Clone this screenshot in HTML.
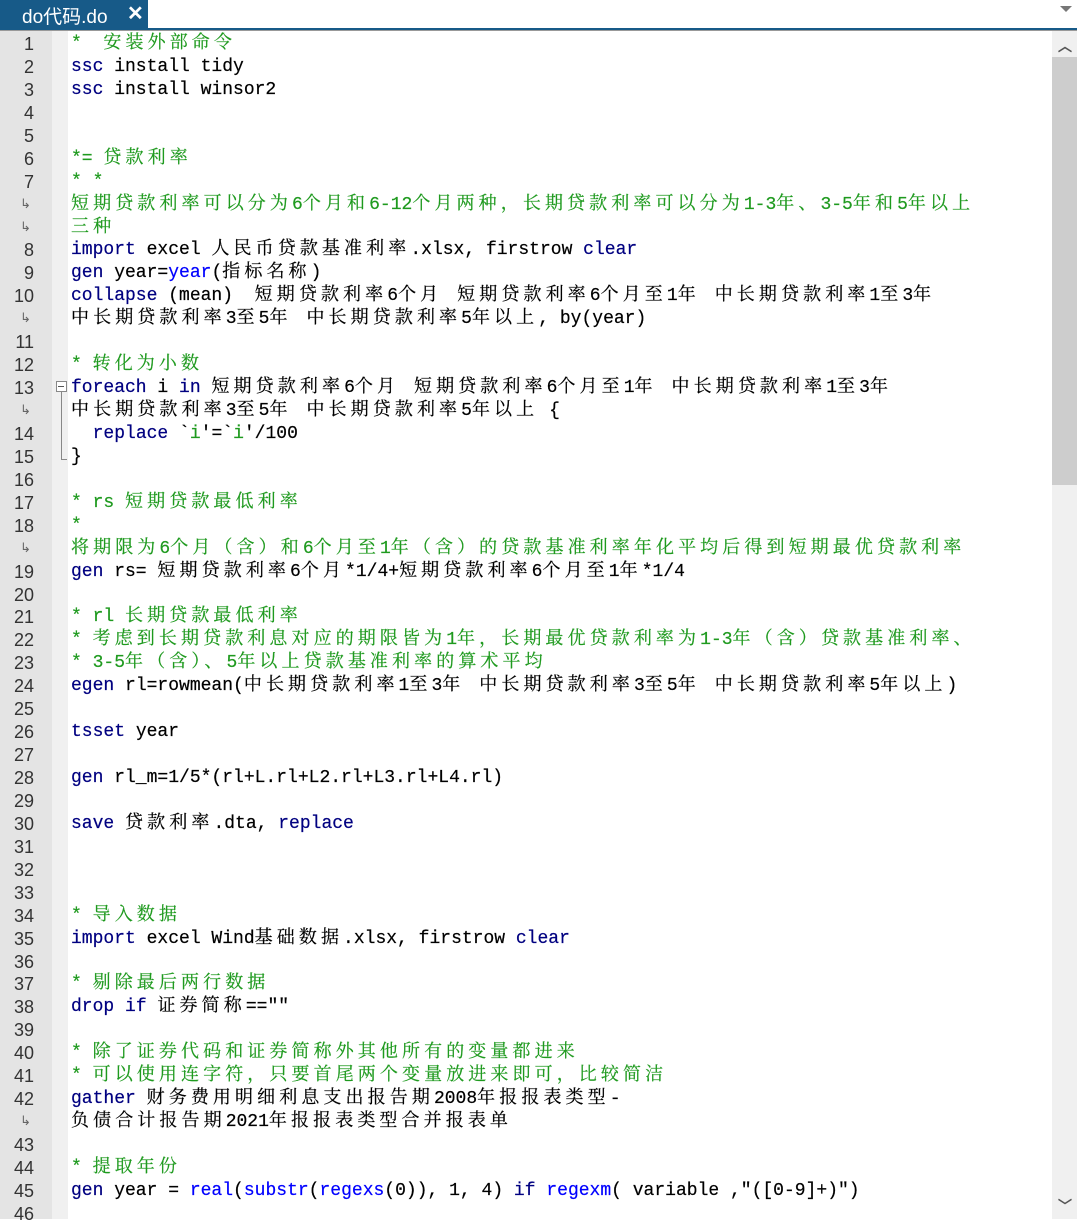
<!DOCTYPE html>
<html><head><meta charset="utf-8"><style>
body{margin:0;width:1077px;height:1219px;overflow:hidden;background:#fff;font-family:"Liberation Mono","Noto Serif CJK SC",monospace;font-size:18px;}
#tabbar{position:absolute;left:0;top:0;width:1077px;height:28px;background:#fff;}
#tab{position:absolute;left:0;top:0;width:148px;height:28px;background:#175a88;color:#fff;font-family:"Liberation Sans","Noto Sans CJK SC",sans-serif;font-size:19px;}
#tab span{position:absolute;left:22px;top:2px;}
#tab i{position:absolute;left:127px;top:1px;font-style:normal;font-weight:bold;font-size:20px;}
#l1{position:absolute;left:0;top:28px;width:1077px;height:2px;background:#175a88;}
#l2{position:absolute;left:0;top:30px;width:1077px;height:1px;background:#999;}
#dd{position:absolute;left:1060px;top:6px;width:0;height:0;border-left:6px solid transparent;border-right:6px solid transparent;border-top:6px solid #777;}
#gut{position:absolute;left:0;top:31px;width:52px;height:1188px;background:#e4e4e4;}
#fold{position:absolute;left:52px;top:31px;width:16px;height:1188px;background:#f0f0f0;}
#sb{position:absolute;left:1052px;top:31px;width:25px;height:1188px;background:#f0f0f0;}
#thumb{position:absolute;left:1052px;top:57px;width:25px;height:428px;background:#cdcdcd;}
.arr{position:absolute;left:1058px;color:#555;font-size:14px;font-family:"DejaVu Sans",sans-serif;font-weight:bold}
#rows{position:absolute;left:0;top:33px;}
.r{height:22.95px;line-height:22.95px;position:relative;white-space:pre;}
.n{position:absolute;left:0;width:34px;text-align:right;color:#333;font-family:"Liberation Sans",sans-serif;font-size:18px;}
.w{position:absolute;left:20px;color:#666;font-size:13px;font-family:"DejaVu Sans",sans-serif;}
.t{position:absolute;left:71px;color:#000;-webkit-text-stroke:0.2px currentColor;}
.k{color:#000080}.f{color:#0000ff}.g{color:#1f9a1f}
.c{letter-spacing:4.1px}
</style></head><body>
<div id="tabbar"></div>
<div id="tab"><span>do代码.do</span><i>✕</i></div>
<div id="dd"></div>
<div id="l1"></div><div id="l2"></div>
<div id="gut"></div><div id="fold"></div>
<div id="sb"></div><div id="thumb"></div>
<div class="arr" style="top:36px">︿</div>
<div class="arr" style="top:1196px">﹀</div>
<div style="position:absolute;left:56px;top:381px;width:9px;height:9px;border:1px solid #888;background:#fff"></div>
<div style="position:absolute;left:58px;top:386px;width:6px;height:1px;background:#555"></div>
<div style="position:absolute;left:61px;top:392px;width:1px;height:67px;background:#888"></div>
<div style="position:absolute;left:61px;top:459px;width:6px;height:1px;background:#888"></div>
<div id="rows">
<div class="r"><span class="n">1</span><span class="t g">*  <span class="c">安装外部命令</span></span></div>
<div class="r"><span class="n">2</span><span class="t"><span class="k">ssc</span> install tidy</span></div>
<div class="r"><span class="n">3</span><span class="t"><span class="k">ssc</span> install winsor2</span></div>
<div class="r"><span class="n">4</span></div>
<div class="r"><span class="n">5</span></div>
<div class="r"><span class="n">6</span><span class="t g">*= <span class="c">贷款利率</span></span></div>
<div class="r"><span class="n">7</span><span class="t g">* *</span></div>
<div class="r"><span class="w">↳</span><span class="t g"><span class="c">短期贷款利率可以分为</span>6<span class="c">个月和</span>6-12<span class="c">个月两种，长期贷款利率可以分为</span>1-3<span class="c">年、</span>3-5<span class="c">年和</span>5<span class="c">年以上</span></span></div>
<div class="r"><span class="w">↳</span><span class="t g"><span class="c">三种</span></span></div>
<div class="r"><span class="n">8</span><span class="t"><span class="k">import</span> excel <span class="c">人民币贷款基准利率</span>.xlsx, firstrow <span class="k">clear</span></span></div>
<div class="r"><span class="n">9</span><span class="t"><span class="k">gen</span> year=<span class="f">year</span>(<span class="c">指标名称</span>)</span></div>
<div class="r"><span class="n">10</span><span class="t"><span class="k">collapse</span> (mean)  <span class="c">短期贷款利率</span>6<span class="c">个月 短期贷款利率</span>6<span class="c">个月至</span>1<span class="c">年 中长期贷款利率</span>1<span class="c">至</span>3<span class="c">年</span></span></div>
<div class="r"><span class="w">↳</span><span class="t"><span class="c">中长期贷款利率</span>3<span class="c">至</span>5<span class="c">年 中长期贷款利率</span>5<span class="c">年以上</span>, by(year)</span></div>
<div class="r"><span class="n">11</span></div>
<div class="r"><span class="n">12</span><span class="t g">* <span class="c">转化为小数</span></span></div>
<div class="r"><span class="n">13</span><span class="t"><span class="k">foreach</span> i <span class="k">in</span> <span class="c">短期贷款利率</span>6<span class="c">个月 短期贷款利率</span>6<span class="c">个月至</span>1<span class="c">年 中长期贷款利率</span>1<span class="c">至</span>3<span class="c">年</span></span></div>
<div class="r"><span class="w">↳</span><span class="t"><span class="c">中长期贷款利率</span>3<span class="c">至</span>5<span class="c">年 中长期贷款利率</span>5<span class="c">年以上</span> {</span></div>
<div class="r"><span class="n">14</span><span class="t">  <span class="k">replace</span> `<span class="g">i</span>'=`<span class="g">i</span>'/100</span></div>
<div class="r"><span class="n">15</span><span class="t">}</span></div>
<div class="r"><span class="n">16</span></div>
<div class="r"><span class="n">17</span><span class="t g">* rs <span class="c">短期贷款最低利率</span></span></div>
<div class="r"><span class="n">18</span><span class="t g">*</span></div>
<div class="r"><span class="w">↳</span><span class="t g"><span class="c">将期限为</span>6<span class="c">个月（含）和</span>6<span class="c">个月至</span>1<span class="c">年（含）的贷款基准利率年化平均后得到短期最优贷款利率</span></span></div>
<div class="r"><span class="n">19</span><span class="t"><span class="k">gen</span> rs= <span class="c">短期贷款利率</span>6<span class="c">个月</span>*1/4+<span class="c">短期贷款利率</span>6<span class="c">个月至</span>1<span class="c">年</span>*1/4</span></div>
<div class="r"><span class="n">20</span></div>
<div class="r"><span class="n">21</span><span class="t g">* rl <span class="c">长期贷款最低利率</span></span></div>
<div class="r"><span class="n">22</span><span class="t g">* <span class="c">考虑到长期贷款利息对应的期限皆为</span>1<span class="c">年，长期最优贷款利率为</span>1-3<span class="c">年（含）贷款基准利率、</span></span></div>
<div class="r"><span class="n">23</span><span class="t g">* 3-5<span class="c">年（含）、</span>5<span class="c">年以上贷款基准利率的算术平均</span></span></div>
<div class="r"><span class="n">24</span><span class="t"><span class="k">egen</span> rl=rowmean(<span class="c">中长期贷款利率</span>1<span class="c">至</span>3<span class="c">年 中长期贷款利率</span>3<span class="c">至</span>5<span class="c">年 中长期贷款利率</span>5<span class="c">年以上</span>)</span></div>
<div class="r"><span class="n">25</span></div>
<div class="r"><span class="n">26</span><span class="t"><span class="k">tsset</span> year</span></div>
<div class="r"><span class="n">27</span></div>
<div class="r"><span class="n">28</span><span class="t"><span class="k">gen</span> rl_m=1/5*(rl+L.rl+L2.rl+L3.rl+L4.rl)</span></div>
<div class="r"><span class="n">29</span></div>
<div class="r"><span class="n">30</span><span class="t"><span class="k">save</span> <span class="c">贷款利率</span>.dta, <span class="k">replace</span></span></div>
<div class="r"><span class="n">31</span></div>
<div class="r"><span class="n">32</span></div>
<div class="r"><span class="n">33</span></div>
<div class="r"><span class="n">34</span><span class="t g">* <span class="c">导入数据</span></span></div>
<div class="r"><span class="n">35</span><span class="t"><span class="k">import</span> excel Wind<span class="c">基础数据</span>.xlsx, firstrow <span class="k">clear</span></span></div>
<div class="r"><span class="n">36</span></div>
<div class="r"><span class="n">37</span><span class="t g">* <span class="c">剔除最后两行数据</span></span></div>
<div class="r"><span class="n">38</span><span class="t"><span class="k">drop</span> <span class="k">if</span> <span class="c">证券简称</span>==""</span></div>
<div class="r"><span class="n">39</span></div>
<div class="r"><span class="n">40</span><span class="t g">* <span class="c">除了证券代码和证券简称外其他所有的变量都进来</span></span></div>
<div class="r"><span class="n">41</span><span class="t g">* <span class="c">可以使用连字符，只要首尾两个变量放进来即可，比较简洁</span></span></div>
<div class="r"><span class="n">42</span><span class="t"><span class="k">gather</span> <span class="c">财务费用明细利息支出报告期</span>2008<span class="c">年报报表类型</span>-</span></div>
<div class="r"><span class="w">↳</span><span class="t"><span class="c">负债合计报告期</span>2021<span class="c">年报报表类型合并报表单</span></span></div>
<div class="r"><span class="n">43</span></div>
<div class="r"><span class="n">44</span><span class="t g">* <span class="c">提取年份</span></span></div>
<div class="r"><span class="n">45</span><span class="t"><span class="k">gen</span> year = <span class="f">real</span>(<span class="f">substr</span>(<span class="f">regexs</span>(0)), 1, 4) <span class="k">if</span> <span class="f">regexm</span>( variable ,"([0-9]+)")</span></div>
<div class="r"><span class="n">46</span></div>
</div>
</body></html>
